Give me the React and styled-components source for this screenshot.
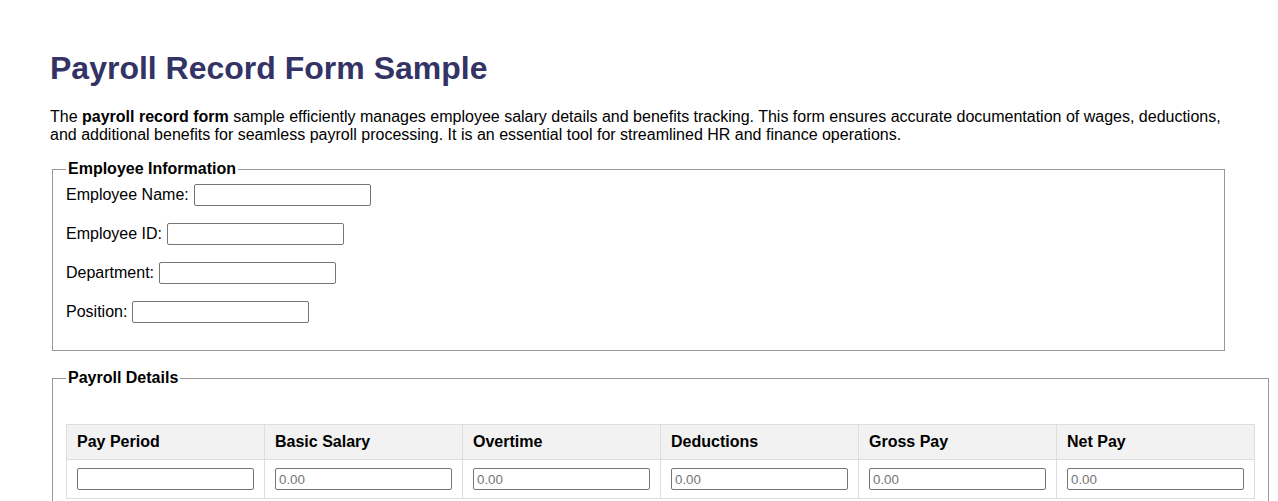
import React from 'react'
import styled, { createGlobalStyle } from 'styled-components'

const GlobalStyle = createGlobalStyle`
  body {
    margin: 50px 0 50px 50px;
    font-family: Arial, "Liberation Sans", sans-serif;
    font-size: 16px;
    color: #000;
    background: #fff;
  }
`

const Page = styled.div`
  width: 1178px;
  overflow: visible;
`

const Title = styled.h1`
  font-size: 32px;
  font-weight: bold;
  color: #333366;
  margin: 0 0 21px;
`

const Intro = styled.p`
  margin: 0 0 16px;
  line-height: 18px;
`

const Section = styled.fieldset`
  border: 1px solid #999;
  margin: 0 3px 18px 2px;
  padding: 6px 13px 10px;
  width: ${p => (p.$fit ? 'max-content' : 'auto')};
`

const Legend = styled.legend`
  font-weight: bold;
  padding: 0 2px;
`

const Row = styled.div`
  display: flex;
  align-items: center;
  height: 22px;
  margin-bottom: 17px;
`

const Label = styled.label`
  margin-right: 5px;
`

const TextInput = styled.input`
  box-sizing: border-box;
  width: 177px;
  height: 22px;
  border: 1px solid #767676;
  border-radius: 2px;
  padding: 1px 3px;
  font-family: Arial, "Liberation Sans", sans-serif;
  font-size: 13.33px;
  &::placeholder { color: #757575; }
`

const Table = styled.table`
  border-collapse: collapse;
  margin-top: 31px;
`

const Th = styled.th`
  background: #f2f2f2;
  border: 1px solid #ddd;
  padding: 8px 10px;
  text-align: left;
  font-weight: bold;
  line-height: 18px;
`

const Td = styled.td`
  border: 1px solid #ddd;
  padding: 8px 10px;
  line-height: 0;
`

const fields = [
  { id: 'name', label: 'Employee Name:' },
  { id: 'empid', label: 'Employee ID:' },
  { id: 'dept', label: 'Department:' },
  { id: 'pos', label: 'Position:' },
]

const columns = ['Pay Period', 'Basic Salary', 'Overtime', 'Deductions', 'Gross Pay', 'Net Pay']

export default function App() {
  return (
    <Page>
      <GlobalStyle />
      <Title>Payroll Record Form Sample</Title>
      <Intro>
        The <b>payroll record form</b> sample efficiently manages employee salary details and benefits tracking. This form ensures accurate documentation of wages, deductions, and additional benefits for seamless payroll processing. It is an essential tool for streamlined HR and finance operations.
      </Intro>
      <form>
        <Section>
          <Legend>Employee Information</Legend>
          {fields.map(f => (
            <Row key={f.id}>
              <Label htmlFor={f.id}>{f.label}</Label>
              <TextInput id={f.id} type="text" />
            </Row>
          ))}
        </Section>
        <Section $fit>
          <Legend>Payroll Details</Legend>
          <Table>
            <thead>
              <tr>
                {columns.map(c => <Th key={c}>{c}</Th>)}
              </tr>
            </thead>
            <tbody>
              <tr>
                {columns.map((c, i) => (
                  <Td key={c}>
                    <TextInput type={i === 0 ? 'text' : 'number'} placeholder={i === 0 ? '' : '0.00'} />
                  </Td>
                ))}
              </tr>
            </tbody>
          </Table>
        </Section>
      </form>
    </Page>
  )
}
